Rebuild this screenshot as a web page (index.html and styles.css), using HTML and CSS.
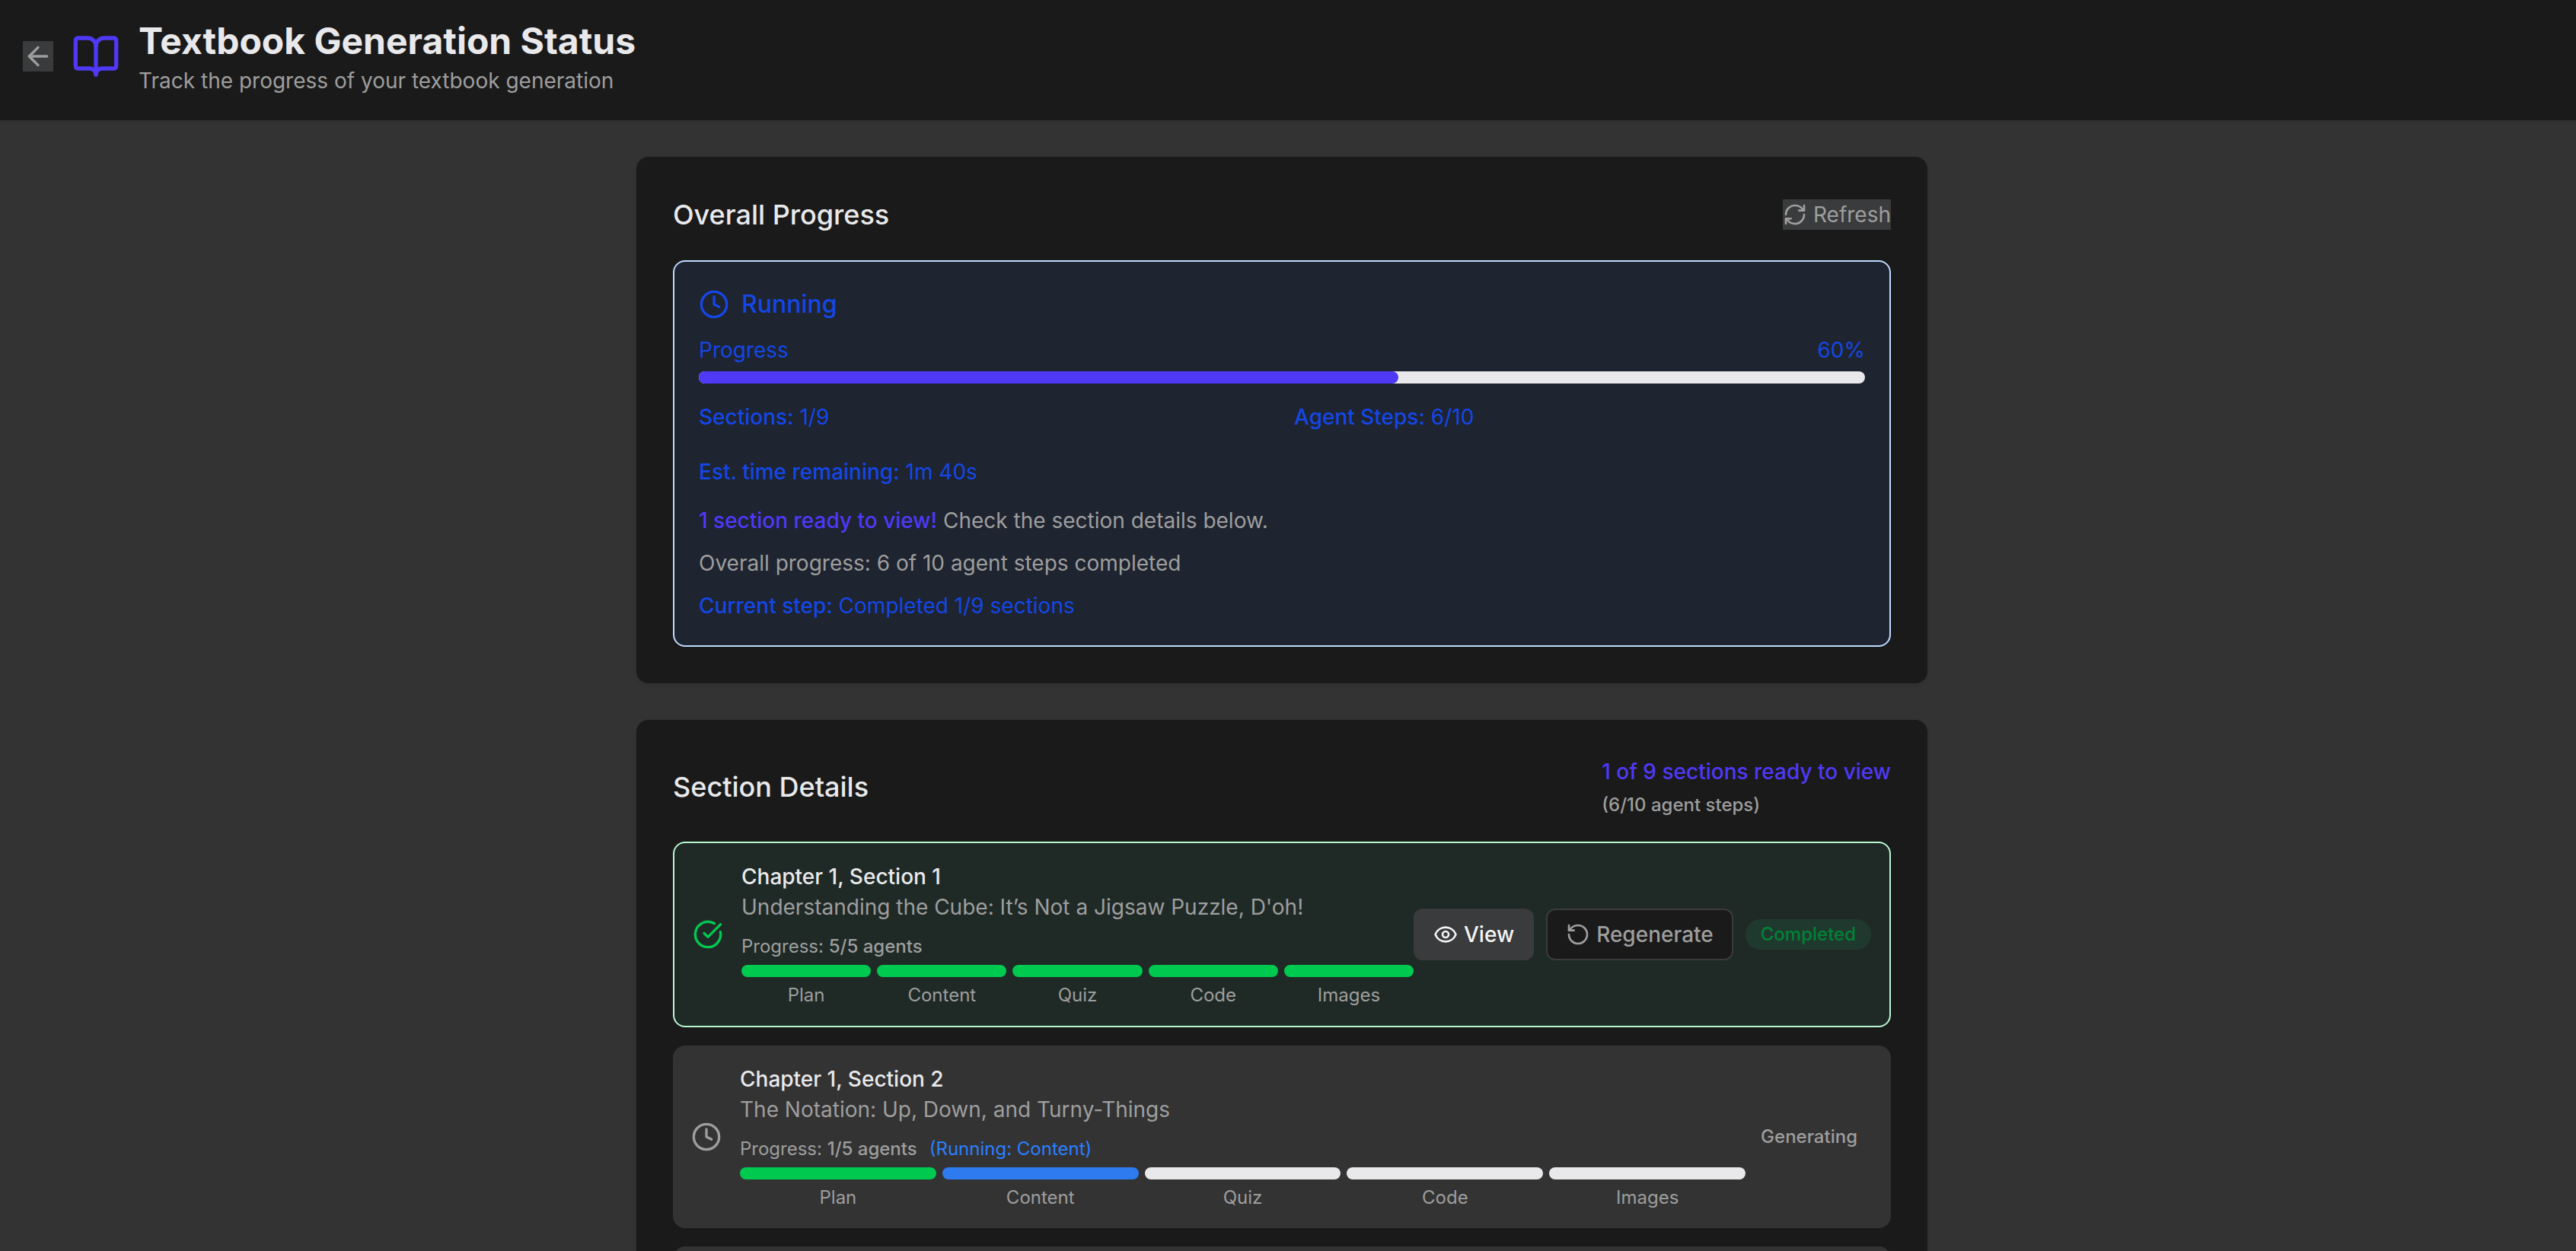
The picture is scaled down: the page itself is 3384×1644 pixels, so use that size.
FILE: index.html
```html
<!DOCTYPE html>
<html lang="en">
<head>
    <meta charset="UTF-8">
    <meta name="viewport" content="width=device-width, initial-scale=1.0">
    <title>Textbook Generation Status</title>
    <link rel="stylesheet" href="styles.css">
</head>
<body>
    <header class="page-header">
        <button type="button" class="back-btn" aria-label="Back">
            <svg class="icon" viewBox="0 0 24 24"><path d="m12 19-7-7 7-7"/><path d="M19 12H5"/></svg>
        </button>
        <svg class="icon logo" viewBox="0 0 24 24"><path d="M12 7v14"/><path d="M3 18a1 1 0 0 1-1-1V4a1 1 0 0 1 1-1h5a4 4 0 0 1 4 4 4 4 0 0 1 4-4h5a1 1 0 0 1 1 1v13a1 1 0 0 1-1 1h-6a3 3 0 0 0-3 3 3 3 0 0 0-3-3z"/></svg>
        <div>
            <h1>Textbook Generation Status</h1>
            <p class="subtitle">Track the progress of your textbook generation</p>
        </div>
    </header>

    <main class="container">
        <section class="card">
            <div class="card-header">
                <h2>Overall Progress</h2>
                <button type="button" class="refresh-btn">
                    <svg class="icon icon-sm" viewBox="0 0 24 24"><path d="M3 12a9 9 0 0 1 9-9 9.75 9.75 0 0 1 6.74 2.74L21 8"/><path d="M21 3v5h-5"/><path d="M21 12a9 9 0 0 1-9 9 9.75 9.75 0 0 1-6.74-2.74L3 16"/><path d="M8 16H3v5"/></svg>
                    Refresh
                </button>
            </div>
            <div class="status-panel">
                <div class="status-title">
                    <svg class="icon" viewBox="0 0 24 24"><circle cx="12" cy="12" r="10"/><path d="M12 6v6l4 2"/></svg>
                    <span>Running</span>
                </div>
                <div class="progress-label">
                    <span>Progress</span>
                    <span>60%</span>
                </div>
                <div class="progress-track">
                    <div class="progress-fill" style="width: 60%"></div>
                </div>
                <div class="stats">
                    <div><b>Sections:</b> 1/9</div>
                    <div><b>Agent Steps:</b> 6/10</div>
                </div>
                <p class="eta"><b>Est. time remaining:</b> 1m 40s</p>
                <p class="ready"><b>1 section ready to view!</b> Check the section details below.</p>
                <p class="note">Overall progress: 6 of 10 agent steps completed</p>
                <p class="current"><b>Current step:</b> Completed 1/9 sections</p>
            </div>
        </section>

        <section class="card">
            <div class="card-header">
                <h2>Section Details</h2>
                <div class="summary">
                    <div class="summary-main">1 of 9 sections ready to view</div>
                    <div class="summary-sub">(6/10 agent steps)</div>
                </div>
            </div>
            <div class="section-list">
                <div class="section-item completed">
                    <svg class="icon" viewBox="0 0 24 24"><path d="M21.801 10A10 10 0 1 1 17 3.335"/><path d="m9 11 3 3L22 4"/></svg>
                    <div class="section-body">
                        <h3>Chapter 1, Section 1</h3>
                        <p class="section-name">Understanding the Cube: It’s Not a Jigsaw Puzzle, D'oh!</p>
                        <p class="agents">Progress: <b>5/5 agents</b></p>
                        <div class="steps">
                            <div class="step done">Plan</div>
                            <div class="step done">Content</div>
                            <div class="step done">Quiz</div>
                            <div class="step done">Code</div>
                            <div class="step done">Images</div>
                        </div>
                    </div>
                    <div class="actions">
                        <button type="button" class="btn btn-view">
                            <svg class="icon icon-sm" viewBox="0 0 24 24"><path d="M2.062 12.348a1 1 0 0 1 0-.696 10.75 10.75 0 0 1 19.876 0 1 1 0 0 1 0 .696 10.75 10.75 0 0 1-19.876 0"/><circle cx="12" cy="12" r="3"/></svg>
                            View
                        </button>
                        <button type="button" class="btn btn-regenerate">
                            <svg class="icon icon-sm" viewBox="0 0 24 24"><path d="M3 12a9 9 0 1 0 9-9 9.75 9.75 0 0 0-6.74 2.74L3 8"/><path d="M3 3v5h5"/></svg>
                            Regenerate
                        </button>
                        <span class="badge badge-completed">Completed</span>
                    </div>
                </div>

                <div class="section-item">
                    <svg class="icon" viewBox="0 0 24 24"><circle cx="12" cy="12" r="10"/><path d="M12 6v6l4 2"/></svg>
                    <div class="section-body">
                        <h3>Chapter 1, Section 2</h3>
                        <p class="section-name">The Notation: Up, Down, and Turny-Things</p>
                        <p class="agents">Progress: <b>1/5 agents</b><span class="running">(Running: Content)</span></p>
                        <div class="steps">
                            <div class="step done">Plan</div>
                            <div class="step active">Content</div>
                            <div class="step">Quiz</div>
                            <div class="step">Code</div>
                            <div class="step">Images</div>
                        </div>
                    </div>
                    <div class="actions">
                        <span class="badge">Generating</span>
                    </div>
                </div>

                <div class="section-item"></div>
            </div>
        </section>
    </main>
</body>
</html>
```
FILE: styles.css
```css
* {
    box-sizing: border-box;
    margin: 0;
    padding: 0;
}
body {
    font-family: Inter, "Liberation Sans", sans-serif;
    font-size: 28px;
    line-height: 40px;
    color: #9e9e9e;
    background-color: #333333;
    height: 100vh;
    overflow: hidden;
}
b {
    font-weight: 500;
}
button {
    font: inherit;
    color: inherit;
    border: none;
    cursor: pointer;
}
.icon {
    display: block;
    flex-shrink: 0;
    width: 40px;
    height: 40px;
    fill: none;
    stroke: currentColor;
    stroke-width: 2;
    stroke-linecap: round;
    stroke-linejoin: round;
}
.icon-sm {
    width: 32px;
    height: 32px;
}

/* Header */
.page-header {
    display: flex;
    align-items: center;
    gap: 24px;
    height: 158px;
    padding: 22px 30px 32px;
    background-color: #1a1a1a;
    box-shadow: 0 2px 4px rgba(0, 0, 0, 0.1);
}
.back-btn {
    background-color: #3a3b3c;
}
.logo {
    width: 64px;
    height: 64px;
    color: #4f39f6;
}
h1 {
    font-size: 48px;
    line-height: 64px;
    font-weight: 700;
    color: #e9e9eb;
}

/* Cards */
.container {
    width: 1696px;
    margin: 48px 0 0 836px;
}
.card {
    padding: 48px;
    margin-bottom: 48px;
    border-radius: 16px;
    background-color: #1a1a1a;
    box-shadow: 0 2px 4px rgba(0, 0, 0, 0.1);
}
.card-header {
    display: flex;
    justify-content: space-between;
    align-items: center;
    margin-bottom: 32px;
}
h2 {
    font-size: 36px;
    line-height: 56px;
    font-weight: 500;
    color: #e9e9eb;
}
.refresh-btn {
    display: flex;
    align-items: center;
    gap: 8px;
    background-color: #3a3b3c;
}

/* Overall status */
.status-panel {
    padding: 32px;
    border: 2px solid #bedbff;
    border-radius: 16px;
    background-color: #1e2430;
    color: #1447e6;
}
.status-title {
    display: flex;
    align-items: center;
    gap: 16px;
    margin-bottom: 16px;
    font-size: 32px;
    line-height: 48px;
    font-weight: 500;
}
.progress-label {
    display: flex;
    justify-content: space-between;
    margin-bottom: 8px;
}
.progress-track {
    height: 16px;
    margin-bottom: 24px;
    border-radius: 8px;
    background-color: #e9e9eb;
}
.progress-fill {
    height: 100%;
    border-radius: 8px;
    background-color: #4f39f6;
}
.stats {
    display: grid;
    grid-template-columns: 1fr 1fr;
    gap: 32px;
    margin-bottom: 32px;
}
.eta {
    margin-bottom: 24px;
}
.ready,
.note {
    margin-bottom: 16px;
    color: #9e9e9e;
}
.ready b {
    color: #4f39f6;
}

/* Section list */
.summary {
    font-weight: 500;
}
.summary-main {
    color: #4f39f6;
}
.summary-sub {
    margin-top: 8px;
    font-size: 24px;
    line-height: 32px;
}
.section-list {
    display: flex;
    flex-direction: column;
    gap: 24px;
}
.section-item {
    display: flex;
    align-items: center;
    min-height: 240px;
    padding: 24px;
    border-radius: 16px;
    background-color: #333333;
}
.section-item.completed {
    border: 2px solid #b9f8cf;
    background-color: #1f2a27;
}
.section-item.completed > .icon {
    color: #00c950;
}
.section-body {
    flex: 1;
    margin-left: 24px;
}
h3 {
    font-size: 28px;
    font-weight: 500;
    color: #e9e9eb;
}
.agents {
    margin: 16px 0 8px;
    font-size: 24px;
    line-height: 32px;
}
.running {
    margin-left: 16px;
    color: #2b7fff;
}
.steps {
    display: flex;
    gap: 8px;
}
.step {
    flex: 1 1 0;
    font-size: 24px;
    line-height: 32px;
    text-align: center;
}
.step::before {
    content: "";
    display: block;
    height: 16px;
    margin-bottom: 8px;
    border-radius: 8px;
    background-color: #e9e9eb;
}
.step.done::before {
    background-color: #00c950;
}
.step.active::before {
    background-color: #2e7bf0;
}
.actions {
    display: flex;
    align-items: center;
    gap: 16px;
}
.btn {
    display: flex;
    align-items: center;
    gap: 8px;
    padding: 12px 24px;
    border: 2px solid #3a3b3c;
    border-radius: 12px;
    font-weight: 500;
}
.btn-view {
    background-color: #3a3b3c;
    color: #f4f4f5;
}
.btn-regenerate {
    background-color: #1a1a1a;
}
.badge {
    padding: 4px 20px;
    border-radius: 20px;
    font-size: 24px;
    line-height: 32px;
    font-weight: 500;
}
.badge-completed {
    background-color: #20392f;
    color: #008236;
}
```
